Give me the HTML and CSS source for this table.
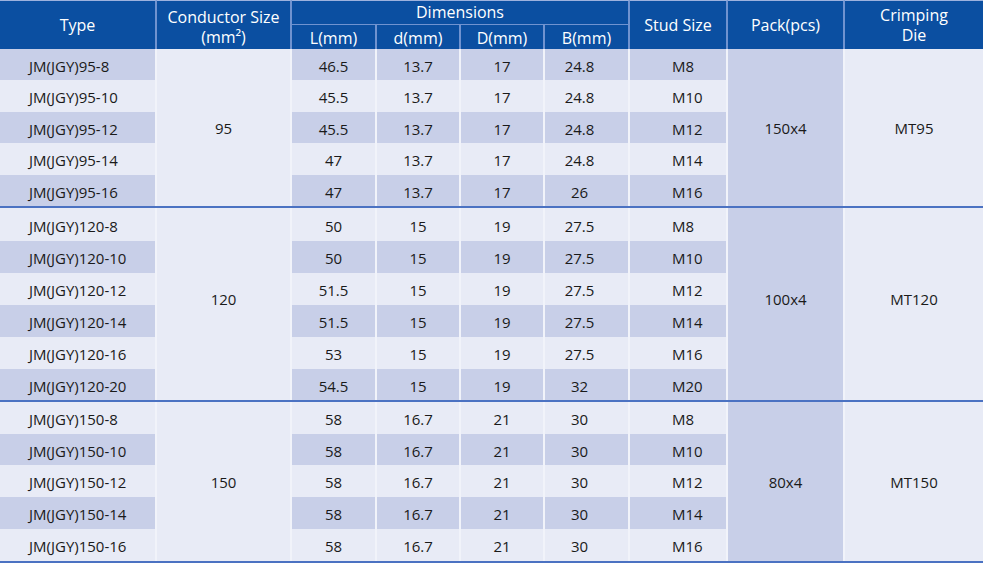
FILE: index.html
```html
<!DOCTYPE html>
<html>
<head>
<meta charset="utf-8">
<link rel="stylesheet" href="styles.css">
</head>
<body>
<div class="tbl">
  <div class="h top span2">Type</div>
  <div class="h top span2 two cond">Conductor Size<br>(mm²)</div>
  <div class="h top dims">Dimensions</div>
  <div class="h top span2">Stud Size</div>
  <div class="h top span2">Pack(pcs)</div>
  <div class="h top span2 two crimp last">Crimping<br>Die</div>
  <div class="h sub">L(mm)</div>
  <div class="h sub">d(mm)</div>
  <div class="h sub">D(mm)</div>
  <div class="h sub">B(mm)</div>

  <!-- group 95 -->
  <div class="c t dk">JM(JGY)95-8</div>
  <div class="c lt g5">95</div>
  <div class="c dk">46.5</div><div class="c dk">13.7</div><div class="c dk">17</div><div class="c b dk">24.8</div><div class="c s dk">M8</div>
  <div class="c dk g5">150x4</div>
  <div class="c lt g5 last">MT95</div>
  <div class="c t lt">JM(JGY)95-10</div><div class="c lt">45.5</div><div class="c lt">13.7</div><div class="c lt">17</div><div class="c b lt">24.8</div><div class="c s lt">M10</div>
  <div class="c t dk">JM(JGY)95-12</div><div class="c dk">45.5</div><div class="c dk">13.7</div><div class="c dk">17</div><div class="c b dk">24.8</div><div class="c s dk">M12</div>
  <div class="c t lt">JM(JGY)95-14</div><div class="c lt">47</div><div class="c lt">13.7</div><div class="c lt">17</div><div class="c b lt">24.8</div><div class="c s lt">M14</div>
  <div class="c t dk">JM(JGY)95-16</div><div class="c dk">47</div><div class="c dk">13.7</div><div class="c dk">17</div><div class="c b dk">26</div><div class="c s dk">M16</div>
  <div class="sep"></div>

  <!-- group 120 -->
  <div class="c t lt">JM(JGY)120-8</div>
  <div class="c lt g6">120</div>
  <div class="c lt">50</div><div class="c lt">15</div><div class="c lt">19</div><div class="c b lt">27.5</div><div class="c s lt">M8</div>
  <div class="c dk g6">100x4</div>
  <div class="c lt g6 last">MT120</div>
  <div class="c t dk">JM(JGY)120-10</div><div class="c dk">50</div><div class="c dk">15</div><div class="c dk">19</div><div class="c b dk">27.5</div><div class="c s dk">M10</div>
  <div class="c t lt">JM(JGY)120-12</div><div class="c lt">51.5</div><div class="c lt">15</div><div class="c lt">19</div><div class="c b lt">27.5</div><div class="c s lt">M12</div>
  <div class="c t dk">JM(JGY)120-14</div><div class="c dk">51.5</div><div class="c dk">15</div><div class="c dk">19</div><div class="c b dk">27.5</div><div class="c s dk">M14</div>
  <div class="c t lt">JM(JGY)120-16</div><div class="c lt">53</div><div class="c lt">15</div><div class="c lt">19</div><div class="c b lt">27.5</div><div class="c s lt">M16</div>
  <div class="c t dk">JM(JGY)120-20</div><div class="c dk">54.5</div><div class="c dk">15</div><div class="c dk">19</div><div class="c b dk">32</div><div class="c s dk">M20</div>
  <div class="sep"></div>

  <!-- group 150 -->
  <div class="c t lt">JM(JGY)150-8</div>
  <div class="c lt g5">150</div>
  <div class="c lt">58</div><div class="c lt">16.7</div><div class="c lt">21</div><div class="c b lt">30</div><div class="c s lt">M8</div>
  <div class="c dk g5">80x4</div>
  <div class="c lt g5 last">MT150</div>
  <div class="c t dk">JM(JGY)150-10</div><div class="c dk">58</div><div class="c dk">16.7</div><div class="c dk">21</div><div class="c b dk">30</div><div class="c s dk">M10</div>
  <div class="c t lt">JM(JGY)150-12</div><div class="c lt">58</div><div class="c lt">16.7</div><div class="c lt">21</div><div class="c b lt">30</div><div class="c s lt">M12</div>
  <div class="c t dk">JM(JGY)150-14</div><div class="c dk">58</div><div class="c dk">16.7</div><div class="c dk">21</div><div class="c b dk">30</div><div class="c s dk">M14</div>
  <div class="c t lt">JM(JGY)150-16</div><div class="c lt">58</div><div class="c lt">16.7</div><div class="c lt">21</div><div class="c b lt">30</div><div class="c s lt">M16</div>
  <div class="sep"></div>
</div>
</body>
</html>
```
FILE: styles.css
```css
html, body {
  margin: 0;
  padding: 0;
  background: #ffffff;
}
body {
  font-family: "Open Sans", "Noto Sans", sans-serif;
  width: 986px;
  height: 563px;
  overflow: hidden;
}
.tbl {
  display: grid;
  width: 983px;
  grid-template-columns: 157px 135px 85px 84px 84px 85px 98px 117px 138px;
  grid-template-rows:
    25px 24px
    31px 32px 31px 32px 31px 2px
    33px 32px 32px 32px 32px 31px 2px
    32px 31px 32px 32px 32px 2px;
}
.h {
  box-sizing: border-box;
  background: #0b4fa1;
  color: #ffffff;
  font-size: 16px;
  line-height: 20px;
  display: flex;
  align-items: center;
  justify-content: center;
  text-align: center;
  border-right: 2px solid #7093d0;
}
.h.top {
  border-top: 1px solid #9db2de;
}
.h.span2 {
  grid-row: span 2;
}
.h.two {
  align-items: flex-start;
}
.h.cond {
  line-height: 20px;
  padding-top: 6px;
}
.h.crimp {
  line-height: 20px;
  padding-top: 4px;
}
.h.dims {
  grid-column: span 4;
  border-bottom: 1px solid #7093d0;
  padding-bottom: 1px;
}
.h.sub {
  padding-top: 1px;
}
.h.last, .c.last {
  border-right: none;
}
.c {
  box-sizing: border-box;
  color: #1a1a1a;
  font-size: 15px;
  display: flex;
  align-items: center;
  justify-content: center;
  padding-top: 2px;
  border-right: 2px solid #f1f3fa;
  white-space: nowrap;
}
.c.t {
  justify-content: flex-start;
  padding-left: 29px;
}
.c.s {
  justify-content: flex-start;
  padding-left: 42px;
}
.c.b {
  padding-right: 14px;
}
.dk {
  background: #c8cfe8;
}
.lt {
  background: #e8ebf6;
}
.g5 {
  grid-row: span 5;
  padding-top: 0;
}
.g6 {
  grid-row: span 6;
  padding-top: 0;
  padding-bottom: 10px;
}
.sep {
  grid-column: 1 / -1;
  background: #4b72c2;
}
```
